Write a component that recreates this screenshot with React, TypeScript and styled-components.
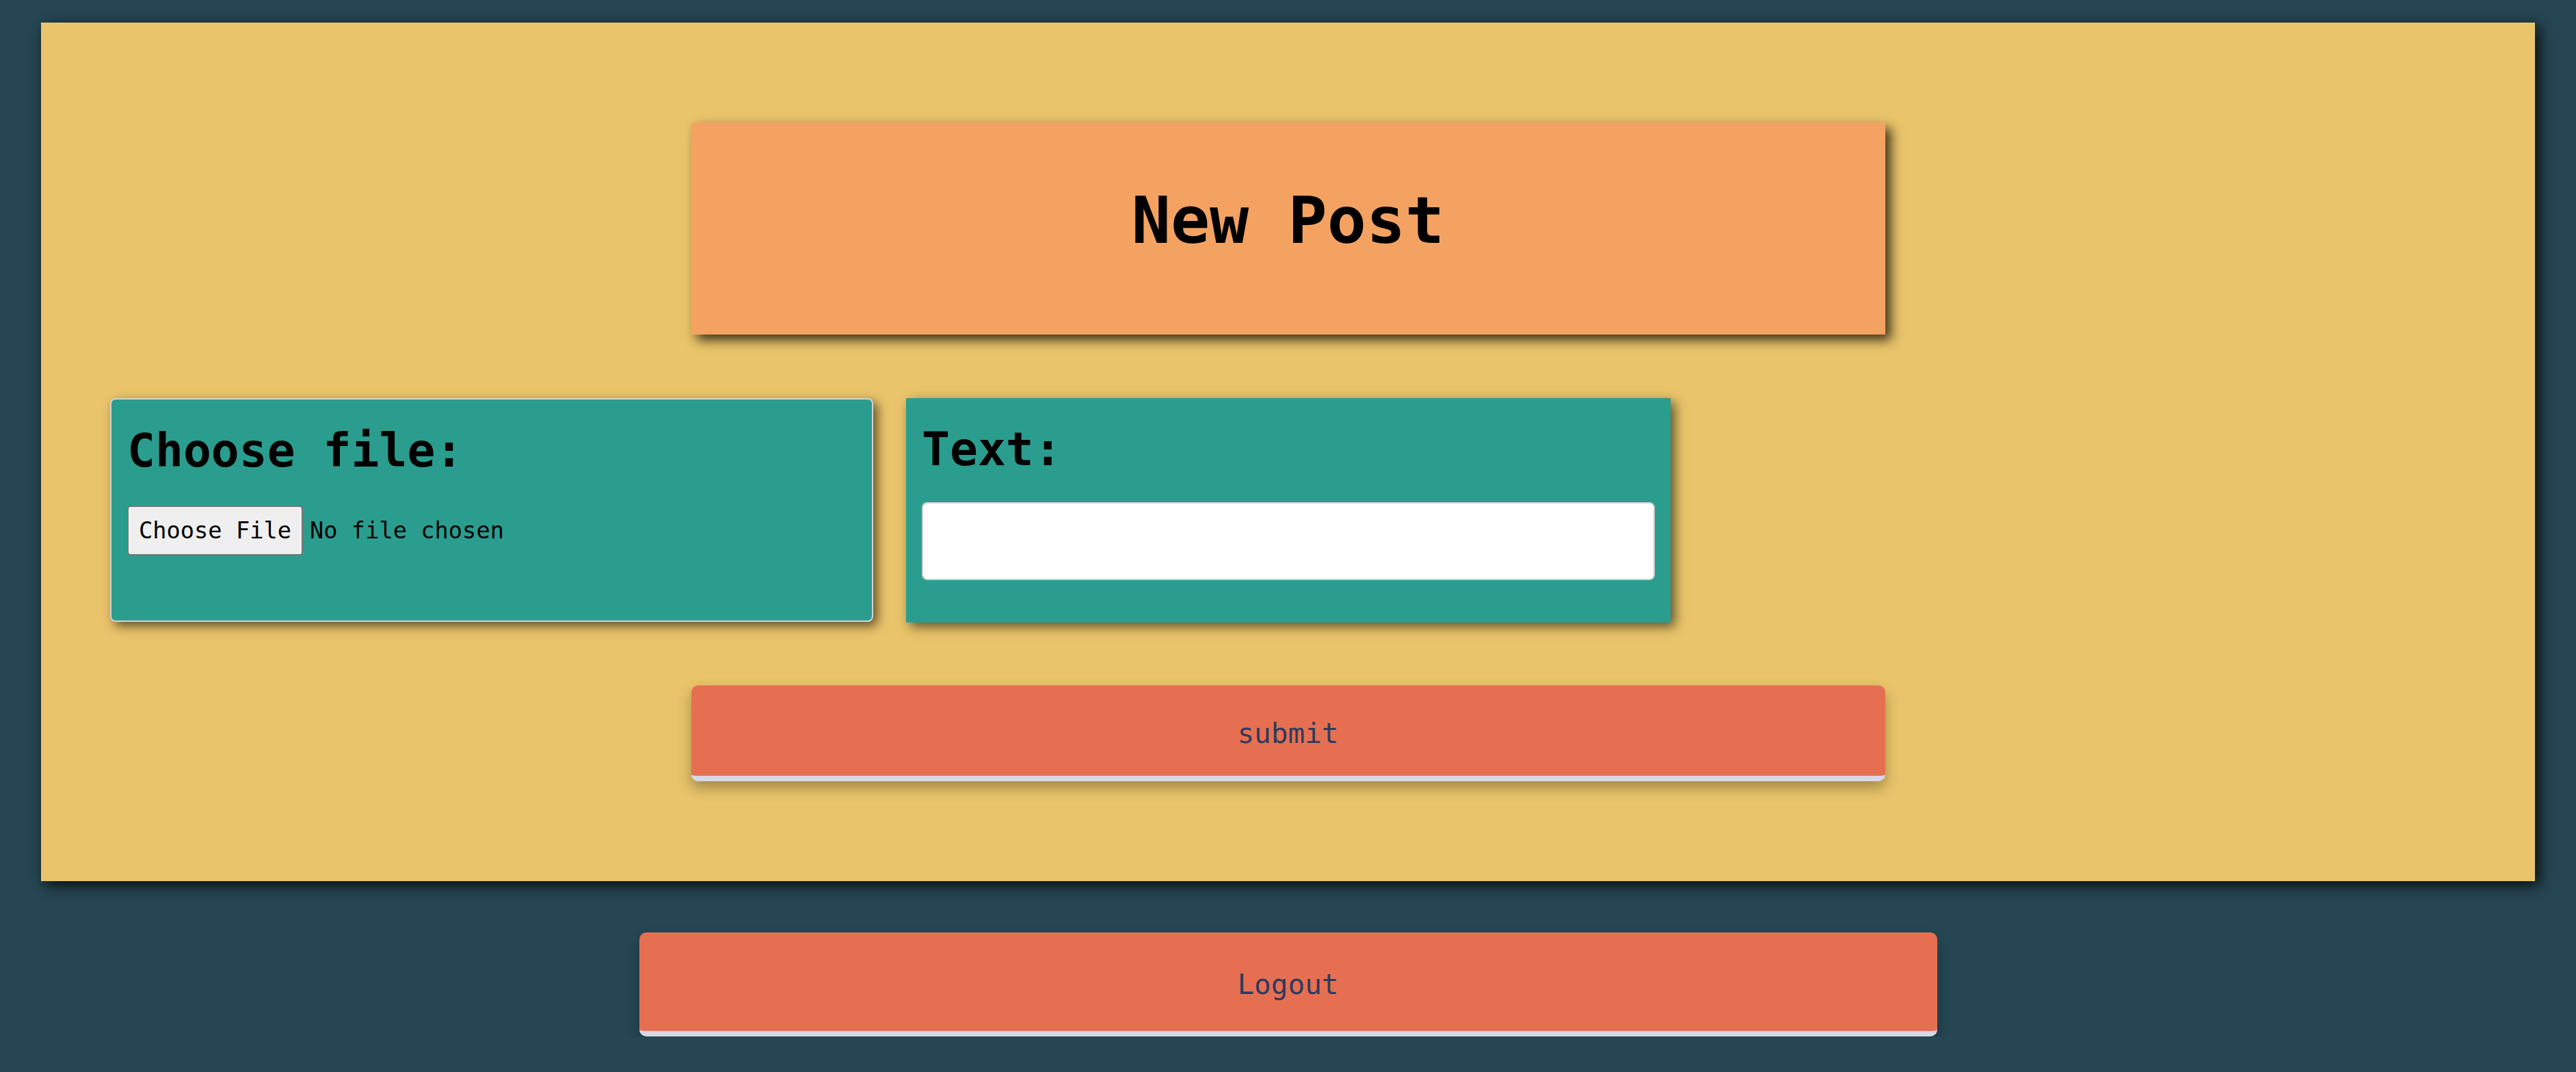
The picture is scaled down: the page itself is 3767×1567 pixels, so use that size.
import React from "react";
import styled, { createGlobalStyle } from "styled-components";

const GlobalStyle = createGlobalStyle`
  html, body {
    margin: 0;
    padding: 0;
    background: #264653;
    font-family: "DejaVu Sans Mono", "Liberation Mono", monospace;
  }
  * { box-sizing: border-box; }
`;

const Page = styled.div`
  padding: 33px 60px 0;
  display: flex;
  flex-direction: column;
  align-items: center;
`;

const Panel = styled.form`
  width: 100%;
  background: #e9c46a;
  box-shadow: 6px 6px 20px rgba(0, 0, 0, 0.85);
  padding: 146px 0 146px;
  display: flex;
  flex-direction: column;
  align-items: center;
`;

const TitleBox = styled.div`
  width: 1746px;
  height: 310px;
  background: #f4a261;
  box-shadow: 8px 8px 16px rgba(0, 0, 0, 0.75);
  padding-top: 88px;
  text-align: center;
`;

const Title = styled.h1`
  margin: 0;
  font-size: 95px;
  font-weight: bold;
  line-height: normal;
  color: #000;
`;

const CardRow = styled.div`
  align-self: stretch;
  margin-top: 93px;
  padding-left: 101px;
  display: grid;
  grid-template-columns: 1116px 1118px;
  gap: 48px;
  height: 328px;
`;

const Card = styled.div<{ $framed?: boolean }>`
  background: #2a9d8f;
  padding: 0 23px;
  border: ${(p) => (p.$framed ? "2px solid #d3d3d3" : "none")};
  border-radius: ${(p) => (p.$framed ? "8px" : "0")};
  box-shadow: 6px 6px 16px rgba(0, 0, 0, 0.6);
  height: ${(p) => (p.$framed ? "327px" : "328px")};
`;

const CardHeading = styled.h2`
  margin: 40px 0 42px;
  font-size: 68px;
  line-height: 70px;
  font-weight: bold;
  color: #000;
`;

const FileField = styled.label`
  display: flex;
  align-items: center;
  gap: 10px;
  margin-top: 45px;
  cursor: pointer;
`;

const HiddenInput = styled.input`
  display: none;
`;

const FileButton = styled.span`
  display: inline-flex;
  align-items: center;
  justify-content: center;
  width: 257px;
  height: 73px;
  background: #efefef;
  border: 2px solid #767676;
  border-radius: 5px;
  font-size: 33.7px;
  color: #000;
`;

const FileName = styled.span`
  font-size: 33.7px;
  color: #000;
`;

const TextInput = styled.input`
  display: block;
  width: 100%;
  height: 114px;
  background: #fff;
  border: 2px solid #cfcfcf;
  border-radius: 8px;
  font-size: 34px;
  padding: 0 16px;
  font-family: inherit;
  outline: none;
`;

const ActionButton = styled.button<{ $w: number; $h: number }>`
  width: ${(p) => p.$w}px;
  height: ${(p) => p.$h}px;
  background: #e76f51;
  border: none;
  border-bottom: 8px solid #d8d7e8;
  border-radius: 10px;
  color: #2e3b5e;
  font-family: "DejaVu Sans Mono", monospace;
  font-size: 41px;
  padding: 8px 0 0;
  display: flex;
  align-items: center;
  justify-content: center;
  cursor: pointer;
`;

const SubmitButton = styled(ActionButton)`
  margin-top: 92px;
  box-shadow: 0 10px 20px rgba(0, 0, 0, 0.3);
`;

const LogoutButton = styled(ActionButton)`
  margin-top: 75px;
  box-shadow: 0 10px 20px rgba(0, 0, 0, 0.25);
`;

export default function App() {
  return (
    <>
      <GlobalStyle />
      <Page>
        <Panel onSubmit={(e) => e.preventDefault()}>
          <TitleBox>
            <Title>New Post</Title>
          </TitleBox>
          <CardRow>
            <Card $framed>
              <CardHeading>Choose file:</CardHeading>
              <FileField>
                <HiddenInput type="file" />
                <FileButton>Choose File</FileButton>
                <FileName>No file chosen</FileName>
              </FileField>
            </Card>
            <Card>
              <CardHeading>Text:</CardHeading>
              <TextInput type="text" />
            </Card>
          </CardRow>
          <SubmitButton type="submit" $w={1746} $h={140}>
            submit
          </SubmitButton>
        </Panel>
        <LogoutButton type="button" $w={1898} $h={152}>
          Logout
        </LogoutButton>
      </Page>
    </>
  );
}
